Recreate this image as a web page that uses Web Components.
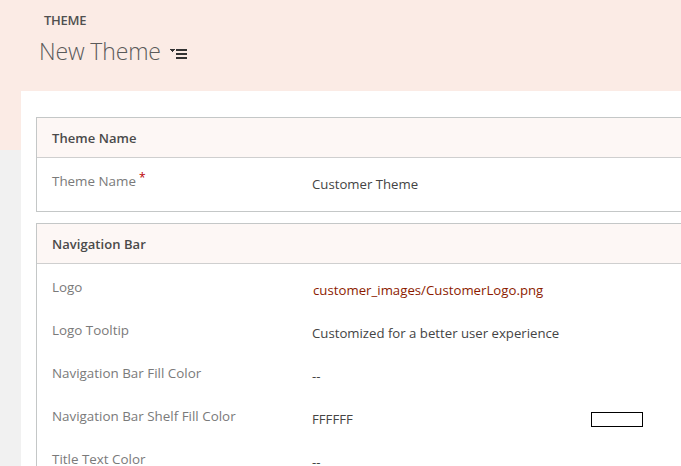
<!DOCTYPE html>
<html><head><meta charset="utf-8"><style>
html,body{margin:0;padding:0;height:466px;overflow:hidden;background:#f1f1f1}
body{font-family:"Open Sans","Noto Sans",sans-serif}
</style></head><body>
<theme-page>
<theme-header slot="header" kind="THEME" title="New Theme"></theme-header>
<form-section heading="Theme Name">
  <form-row label="Theme Name" required value="Customer Theme" pad="59"></form-row>
</form-section>
<form-section heading="Navigation Bar" gap>
  <form-row label="Logo" value="customer_images/CustomerLogo.png" link></form-row>
  <form-row label="Logo Tooltip" value="Customized for a better user experience"></form-row>
  <form-row label="Navigation Bar Fill Color" value="--"></form-row>
  <form-row label="Navigation Bar Shelf Fill Color" value="FFFFFF" swatch></form-row>
  <form-row label="Title Text Color" value="--"></form-row>
</form-section>
</theme-page>
<script>
const def=(n,css,html)=>customElements.define(n,class extends HTMLElement{
  connectedCallback(){ if(this.shadowRoot)return; const s=this.attachShadow({mode:'open'}); s.innerHTML=`<style>${css}</style>`+(typeof html==='function'?html(this):html); }
});
def('theme-page',`
:host{display:block;width:681px;height:466px;overflow:hidden;background:linear-gradient(#fbebe5,#fbebe5) 0 0/100% 150px no-repeat,#f1f1f1}
.panel{margin-left:21px;height:375px;background:#fff;padding:26px 0 0 15px;box-sizing:border-box;overflow:hidden}
`,`<slot name="header"></slot><div class="panel"><slot></slot></div>`);
def('theme-header',`
:host{display:block;height:91px;box-sizing:border-box;padding:11px 0 0 39px;color:#444}
.kind{font-size:13px;font-weight:600;line-height:18px;margin-left:5px;color:#505050;letter-spacing:-.3px}
.line{display:flex;align-items:center;margin-top:5px;height:34px}
h1{margin:0;font-size:23px;font-weight:300;line-height:34px;color:#5a5a5a;letter-spacing:-.13px}
svg{display:block;margin:6px 0 0 9px}
`,h=>`<div class="kind">${h.getAttribute('kind')}</div><div class="line"><h1>${h.getAttribute('title')}</h1>
<svg width="17" height="12" viewBox="0 0 17 12" shape-rendering="crispEdges"><path d="M0 1h5L2.5 4z" fill="#333"/><path d="M6 1h11v2H6zM6 5h11v2H6zM6 9h11v2H6z" fill="#333"/></svg></div>`);
def('form-section',`
:host{display:block;width:700px;box-sizing:border-box;border:1px solid #c4c7c7;border-right:0}
:host([gap]){margin-top:11px;border-bottom:0}
.h{height:40px;box-sizing:border-box;border-bottom:1px solid #cfcfcf;background:#fdf7f5;padding-left:15px;line-height:40px;font-size:13px;font-weight:600;color:#4a4a4a;letter-spacing:.05px}
`,h=>`<div class="h">${h.getAttribute('heading')}</div><slot></slot>`);
def('form-row',`
:host{display:block;height:43px;font-size:13.2px}
:host([pad]){height:53px}
.r{display:flex;height:100%;padding-left:15px}
.l{width:260px;padding-top:14px;line-height:18px;color:#7a7a7a;flex:none;font-size:13.4px}
.v{padding-top:17px;line-height:18px;color:#444;flex:none;width:279px}
.v.a{color:#8c1b00;padding-left:1px;width:278px;padding-top:17px;letter-spacing:.02px}
.req{color:#b00;font-size:12px;position:relative;top:-4px;margin-left:3px}
.sw{width:52px;height:15px;box-sizing:border-box;border:1px solid #000;background:#fff;margin-top:19px;flex:none}
`,h=>`<div class="r"><div class="l">${h.getAttribute('label')}${h.hasAttribute('required')?'<span class="req">*</span>':''}</div><div class="v${h.hasAttribute('link')?' a':''}">${h.getAttribute('value')}</div>${h.hasAttribute('swatch')?'<div class="sw"></div>':''}</div>`);
</script>
</body></html>
